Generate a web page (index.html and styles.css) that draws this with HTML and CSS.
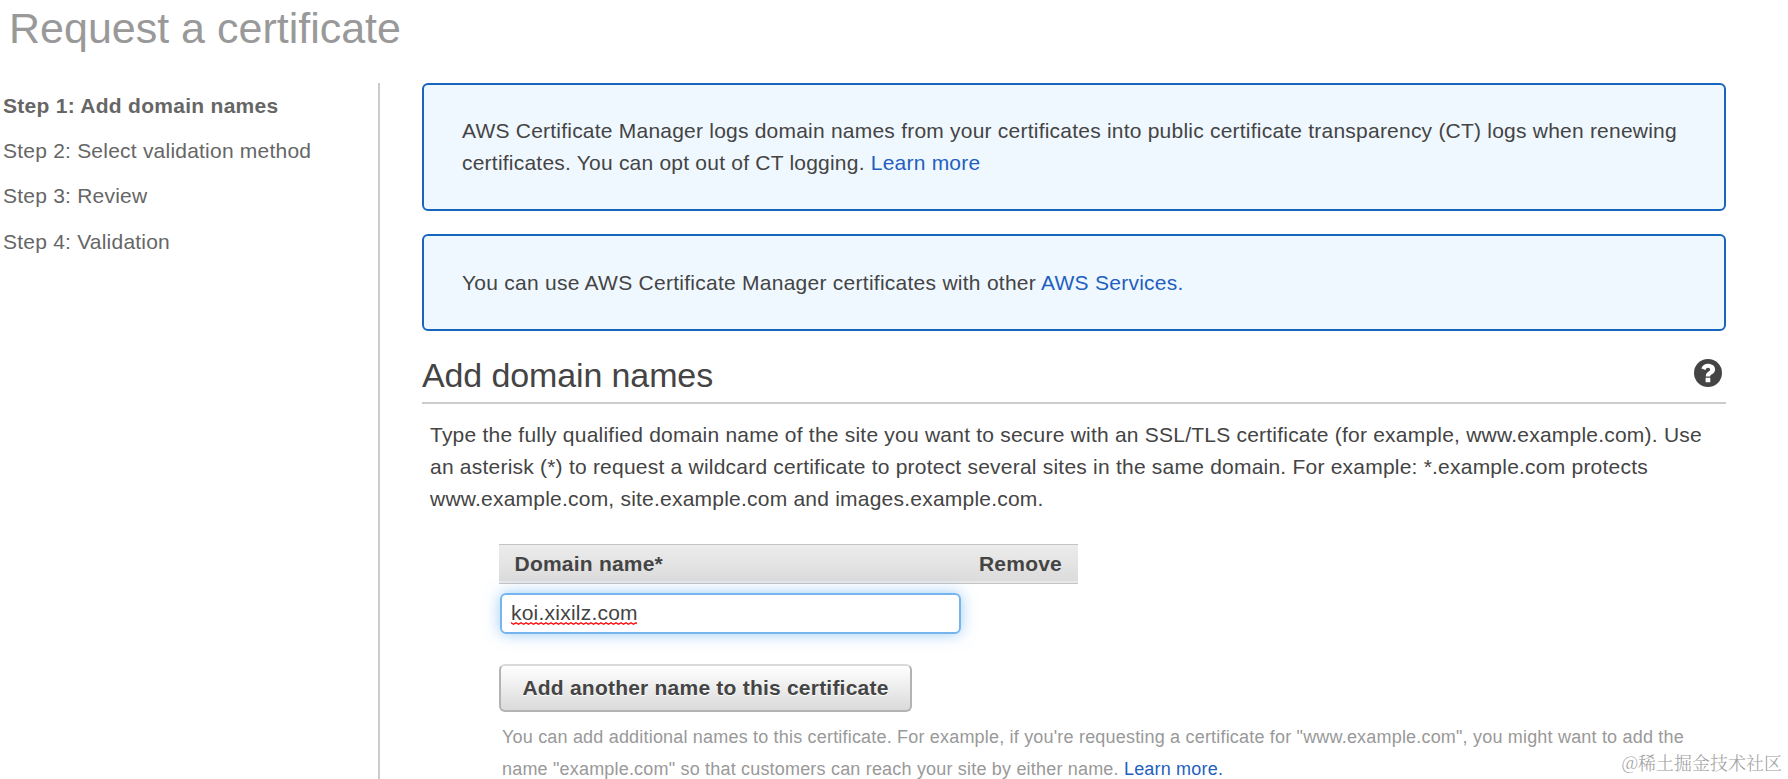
FILE: index.html
```html
<!DOCTYPE html>
<html lang="en">
<head>
<meta charset="utf-8">
<title>Request a certificate</title>
<link rel="stylesheet" href="styles.css">
</head>
<body>
<h1 class="page-title">Request a certificate</h1>
<div class="layout">
  <nav class="steps">
    <div class="step current">Step 1: Add domain names</div>
    <div class="step">Step 2: Select validation method</div>
    <div class="step">Step 3: Review</div>
    <div class="step">Step 4: Validation</div>
  </nav>
  <main class="content">
    <div class="notice">AWS Certificate Manager logs domain names from your certificates into public certificate transparency (CT) logs when renewing<br>certificates. You can opt out of CT logging. <a class="link">Learn more</a></div>
    <div class="notice notice-short">You can use AWS Certificate Manager certificates with other <a class="link">AWS Services.</a></div>
    <div class="section-head">
      <h2 class="section-title">Add domain names</h2>
      <svg class="help" viewBox="0 0 28 28"><circle cx="14" cy="14" r="14" fill="#444"/><path d="M7.300 9.600C8.400 6.600 10.600 4.800 14 4.800c4 0 7.100 2.200 7.100 5.600 0 2.300-1.400 3.700-3.200 4.900-1.200.8-1.700 1.100-1.700 2.200h-4.400c0-2.300.6-3.300 2.500-4.700 1.200-.8 1.800-1.300 1.800-2.300 0-1-.9-1.700-2-1.700-1.300 0-2 .8-2.600 2.200zM11.600 18.700h4.700v4.500h-4.700z" fill="#fff"/></svg>
    </div>
    <p class="intro">Type the fully qualified domain name of the site you want to secure with an SSL/TLS certificate (for example, www.example.com). Use<br>an asterisk (*) to request a wildcard certificate to protect several sites in the same domain. For example: *.example.com protects<br>www.example.com, site.example.com and images.example.com.</p>
    <div class="domains">
      <div class="table-head"><span>Domain name*</span><span>Remove</span></div>
      <div class="field"><span class="misspelled">koi.xixilz.com<svg class="squiggle" width="126" height="4"><defs><pattern id="wave" width="5" height="4" patternUnits="userSpaceOnUse"><path d="M-1 1.300L0 .8 2.500 2.300 5 .8 6 1.300" fill="none" stroke="#f00" stroke-width="1.200"/></pattern></defs><rect width="126" height="4" fill="url(#wave)"/></svg></span></div>
      <button class="add">Add another name to this certificate</button>
      <p class="hint">You can add additional names to this certificate. For example, if you're requesting a certificate for "www.example.com", you might want to add the<br>name "example.com" so that customers can reach your site by either name. <a class="link">Learn more.</a></p>
    </div>
  </main>
</div>
<div class="watermark">@稀土掘金技术社区</div>
</body>
</html>
```
FILE: styles.css
```css
* { box-sizing: border-box; }
body {
  margin: 0;
  height: 779px;
  overflow: hidden;
  background: #fff;
  color: #444;
  font: 21px/32px "Liberation Sans", Arial, sans-serif;
  letter-spacing: 0.22px;
}
.page-title {
  margin: 0;
  padding: 3px 0 0 9px;
  height: 83px;
  color: #999;
  font-size: 43px;
  font-weight: normal;
  line-height: 50px;
  letter-spacing: 0;
}
.layout { display: flex; height: 696px; }
.steps {
  width: 380px;
  padding: 7px 0 0 3px;
  border-right: 2px solid #ccc;
  color: #666;
}
.step { height: 45.200px; white-space: nowrap; }
.current { font-weight: bold; letter-spacing: 0.28px; }
.content { width: 1304px; margin-left: 42px; white-space: nowrap; }
.notice {
  height: 128px;
  margin-bottom: 23px;
  padding: 30px 38px;
  background: #f0f8ff;
  border: 2px solid #1866bb;
  border-radius: 6px;
}
.notice-short {
  height: 97px;
  margin-bottom: 0;
  padding-top: 31px;
  letter-spacing: 0.26px;
}
.link { color: #1f5fbf; }
.section-head {
  display: flex;
  justify-content: space-between;
  height: 73px;
  padding: 24px 4.500px 0 0;
  border-bottom: 2px solid #ccc;
}
.section-title {
  margin: 0;
  font-size: 34px;
  font-weight: normal;
  line-height: 40px;
  letter-spacing: -0.12px;
}
.help { width: 28px; height: 28px; margin-top: 3.500px; }
.intro { margin: 0; padding: 15px 0 0 8px; letter-spacing: 0.22px; }
.domains { margin: 29px 0 0 77px; }
.table-head {
  display: flex;
  justify-content: space-between;
  width: 579px;
  height: 40px;
  padding: 3px 16px 0 15.500px;
  border: 1px solid #c4c4c4;
  border-width: 1px 0;
  background: linear-gradient(#ececec, #dcdcdc 94%, #e8e8e8 94%);
  font-weight: bold;
}
.field {
  width: 461px;
  height: 41px;
  margin: 9px 0 0 1px;
  padding: 2px 9px;
  border: 2px solid #74b5f0;
  border-radius: 6px;
  box-shadow: 0 0 15px rgba(116, 181, 240, 0.7);
}
.misspelled { position: relative; }
.squiggle { position: absolute; left: 0; bottom: -2px; }
.add {
  display: block;
  width: 413px;
  height: 48px;
  margin-top: 30px;
  padding: 0;
  border: 2px solid #b3b3b3;
  border-top-color: #dadada;
  border-radius: 6px;
  background: linear-gradient(#fff, #dadada);
  color: #444;
  font: bold 21px/32px "Liberation Sans", Arial, sans-serif;
  letter-spacing: inherit;
  text-shadow: 0 1px 0 #fff;
}
.hint {
  margin: 0;
  padding: 9px 0 0 3px;
  color: #999;
  font-size: 18px;
  letter-spacing: 0.19px;
}
.watermark {
  position: absolute;
  right: 6px;
  bottom: 3px;
  color: #a0a0a0;
  font: 300 18px/28px "Noto Serif CJK SC", "Noto Sans CJK SC", serif;
  letter-spacing: 0;
}
```
